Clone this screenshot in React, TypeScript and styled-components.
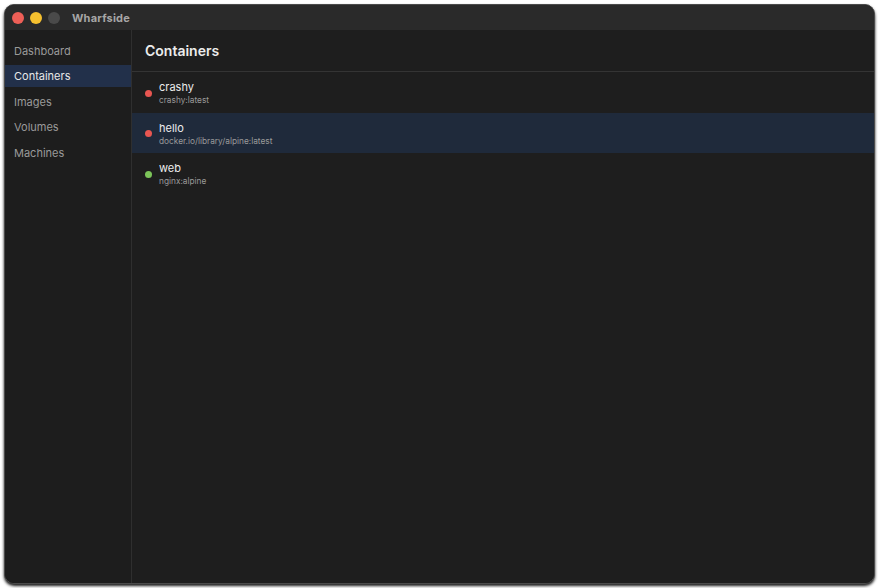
import React from 'react';
import styled, { createGlobalStyle } from 'styled-components';

// Types
interface Container {
  name: string;
  image: string;
  running: boolean;
}

const GlobalStyle = createGlobalStyle`
  html, body {
    margin: 0;
    padding: 0;
    background: #ffffff;
  }
  body {
    font-family: Inter, "Helvetica Neue", "Liberation Sans", sans-serif;
    -webkit-font-smoothing: antialiased;
  }
`;

const navItems = ['Dashboard', 'Containers', 'Images', 'Volumes', 'Machines'];

const containers: Container[] = [
  { name: 'crashy', image: 'crashy:latest', running: false },
  { name: 'hello', image: 'docker.io/library/alpine:latest', running: false },
  { name: 'web', image: 'nginx:alpine', running: true },
];

export default function App() {
  return (
    <>
      <GlobalStyle />
      <Page>
        <Window>
          <TitleBar>
            <Lights>
              <Light color="#ee5f57" />
              <Light color="#f5c02f" />
              <Light color="#4a4a4a" />
            </Lights>
            <WindowTitle>Wharfside</WindowTitle>
          </TitleBar>
          <Body>
            <Sidebar>
              {navItems.map((item) => (
                <NavItem key={item} active={item === 'Containers'}>
                  {item}
                </NavItem>
              ))}
            </Sidebar>
            <Main>
              <Header>Containers</Header>
              <List>
                {containers.map((c) => (
                  <Row key={c.name} selected={c.name === 'hello'}>
                    <Dot running={c.running} />
                    <RowText>
                      <RowName>{c.name}</RowName>
                      <RowImage>{c.image}</RowImage>
                    </RowText>
                  </Row>
                ))}
              </List>
            </Main>
          </Body>
        </Window>
      </Page>
    </>
  );
}

// Styled components
const Page = styled.div`
  width: 880px;
  height: 588px;
  padding: 4px 4px 0 4px;
  box-sizing: border-box;
`;

const Window = styled.div`
  width: 871px;
  height: 580px;
  box-sizing: border-box;
  border-radius: 10px;
  border: 1px solid #4b4b4b;
  background: #1e1e1e;
  overflow: hidden;
  display: flex;
  flex-direction: column;
  box-shadow: 0 2px 3px rgba(0, 0, 0, 0.9);
`;

const TitleBar = styled.div`
  height: 25px;
  flex-shrink: 0;
  background: #2a2a2a;
  display: flex;
  align-items: center;
  padding-left: 7px;
`;

const Lights = styled.div`
  display: flex;
  gap: 6px;
  margin-right: 12px;
`;

const Light = styled.span<{ color: string }>`
  width: 12px;
  height: 12px;
  border-radius: 50%;
  background: ${(p) => p.color};
`;

const WindowTitle = styled.div`
  color: #a6a6a6;
  font-size: 11px;
  font-weight: 700;
  letter-spacing: 0.2px;
`;

const Body = styled.div`
  flex: 1;
  display: flex;
  min-height: 0;
`;

const Sidebar = styled.div`
  width: 126px;
  flex-shrink: 0;
  background: #1d1d1d;
  border-right: 1px solid #2f2f2f;
  padding-top: 10px;
  display: flex;
  flex-direction: column;
  gap: 3.4px;
`;

const NavItem = styled.div<{ active?: boolean }>`
  height: 22px;
  display: flex;
  align-items: center;
  padding-left: 9px;
  font-size: 11px;
  color: ${(p) => (p.active ? '#e8e8e8' : '#9a9a9a')};
  background: ${(p) => (p.active ? '#22304a' : 'transparent')};
`;

const Main = styled.div`
  flex: 1;
  display: flex;
  flex-direction: column;
  background: #1e1e1e;
`;

const Header = styled.div`
  height: 41px;
  display: flex;
  align-items: center;
  padding-left: 13px;
  font-size: 14px;
  font-weight: 600;
  color: #ececec;
  border-bottom: 1px solid #343434;
`;

const List = styled.div`
  display: flex;
  flex-direction: column;
`;

const Row = styled.div<{ selected?: boolean }>`
  height: 40.5px;
  display: flex;
  align-items: center;
  padding-left: 13px;
  padding-top: 2px;
  box-sizing: border-box;
  gap: 7px;
  background: ${(p) => (p.selected ? '#1f2a3b' : 'transparent')};
`;

const Dot = styled.span<{ running: boolean }>`
  width: 7px;
  height: 7px;
  border-radius: 50%;
  flex-shrink: 0;
  background: ${(p) => (p.running ? '#7cc459' : '#e85651')};
`;

const RowText = styled.div`
  display: flex;
  flex-direction: column;
  gap: 1px;
`;

const RowName = styled.div`
  font-size: 11px;
  color: #ececec;
  line-height: 14px;
`;

const RowImage = styled.div`
  font-size: 8.3px;
  color: #9a9a9a;
  line-height: 11px;
`;
